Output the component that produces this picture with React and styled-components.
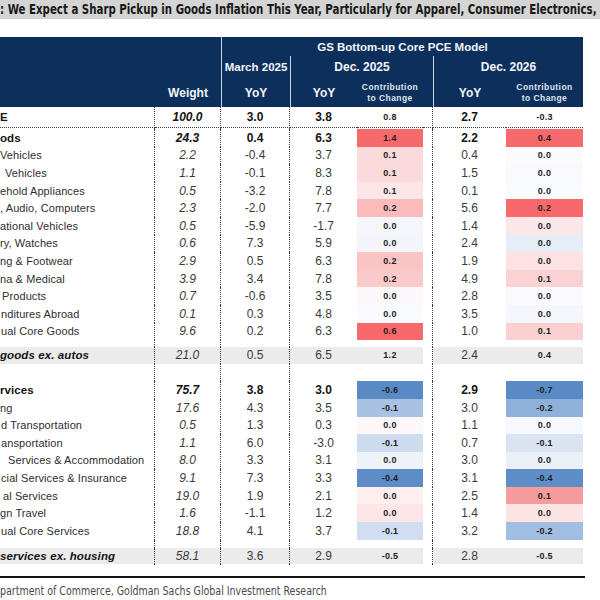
import React from 'react';
import styled, { createGlobalStyle } from 'styled-components';

const GRID = '155px 66px 69px 67px 66px 10px 73px 77px';
const DOT = '1px dotted #3a3a3a';
const NAVY = '#0d2f5c';
const GRAY = '#ebebeb';
const CONDENSED = '"Liberation Sans Narrow", "DejaVu Sans Condensed", sans-serif';

const GlobalStyle = createGlobalStyle`
  html, body { margin: 0; padding: 0; background: #fff; }
  body { font-family: "Liberation Sans", Arial, sans-serif; overflow: hidden; }
  * { box-sizing: border-box; }
`;

const Page = styled.div`
  width: 600px;
  height: 600px;
  overflow: hidden;
  background: #fff;
`;

const TitleBar = styled.div`
  height: 19px;
  background: #d4d4d4;
  color: #181818;
  font-family: ${CONDENSED};
  font-weight: 700;
  font-size: 14px;
  line-height: 19px;
  white-space: nowrap;
  overflow: hidden;
`;

const Squeeze = styled.span`
  display: inline-block;
  transform: scaleX(${p => p.$x});
  transform-origin: left center;
`;

const Table = styled.div`
  margin-top: 18px;
  width: 583px;
`;

const Header = styled.div`
  display: grid;
  grid-template-columns: ${GRID};
  grid-template-rows: 19px 22px 29px;
  background: ${NAVY};
  color: #f2f4f8;
`;

const HeadCell = styled.div`
  grid-column: ${p => p.$col};
  grid-row: ${p => p.$row};
  border-left: ${p => (p.$line ? '1px solid #c8d2df' : 'none')};
  display: flex;
  align-items: center;
  justify-content: center;
  font-weight: 700;
  font-size: ${p => p.$size || 11.5}px;
  white-space: nowrap;
`;

const SubHead = styled.div`
  font-size: 8.5px;
  font-weight: 700;
  line-height: 11px;
  letter-spacing: 0.45px;
  text-align: center;
  color: #dfe6ef;
`;

const Row = styled.div`
  display: grid;
  grid-template-columns: ${GRID};
  height: ${p => p.$h}px;
`;

const Cell = styled.div`
  display: flex;
  align-items: center;
  justify-content: center;
  white-space: nowrap;
  overflow: hidden;
  border-right: ${p => (p.$line ? DOT : 'none')};
  border-bottom: ${p => (p.$under ? DOT : 'none')};
  background: ${p => p.$bg || 'transparent'};
`;

const LabelCell = styled(Cell)`
  justify-content: flex-start;
  padding-left: ${p => p.$indent || 0}px;
  font-size: ${p => (p.$bold ? 11.5 : 11)}px;
  letter-spacing: 0.1px;
  font-weight: ${p => (p.$bold ? 700 : 400)};
  font-style: ${p => (p.$italic ? 'italic' : 'normal')};
  color: ${p => (p.$bold ? '#141414' : '#2e2e2e')};
`;

const NumCell = styled(Cell)`
  font-size: 12px;
  font-weight: ${p => (p.$bold ? 700 : 400)};
  font-style: ${p => (p.$italic ? 'italic' : 'normal')};
  color: ${p => (p.$bold ? '#141414' : '#3a3a3a')};
`;

const ContribCell = styled(Cell)`
  font-size: 9px;
  font-weight: 700;
  letter-spacing: 0.3px;
  color: #1e1e1e;
`;

const RuleLine = styled.div`
  margin-top: 11px;
  width: 585px;
  height: 2px;
  background: #111;
`;

const Source = styled.div`
  font-family: ${CONDENSED};
  font-size: 13px;
  color: #4a4a4a;
  line-height: 26px;
  white-space: nowrap;
  overflow: hidden;
`;

const goods = [
  ['Vehicles', 0, '2.2', '-0.4', '3.7', '0.1', '#fbdadb', '0.4', '0.0', '#fbfbfe'],
  ['Vehicles', 5, '1.1', '-0.1', '8.3', '0.1', '#fbdadb', '1.5', '0.0', '#f9fafd'],
  ['ehold Appliances', 0, '0.5', '-3.2', '7.8', '0.1', '#fce6e7', '0.1', '0.0', '#fafbfe'],
  [', Audio, Computers', 0, '2.3', '-2.0', '7.7', '0.2', '#fabbbd', '5.6', '0.2', '#f8696b'],
  ['ational Vehicles', 0, '0.5', '-5.9', '-1.7', '0.0', '#f5f6fc', '1.4', '0.0', '#fbe7e8'],
  ['ry, Watches', 0, '0.6', '7.3', '5.9', '0.0', '#f3f5fb', '2.4', '0.0', '#e6edf7'],
  ['ng & Footwear', 0, '2.9', '0.5', '6.3', '0.2', '#fac4c5', '1.9', '0.0', '#fce2e3'],
  ['na & Medical', 0, '3.9', '3.4', '7.8', '0.2', '#fac9ca', '4.9', '0.1', '#fbd2d3'],
  ['Products', 2, '0.7', '-0.6', '3.5', '0.0', '#fbf7fa', '2.8', '0.0', '#fafafe'],
  ['nditures Abroad', 1, '0.1', '0.3', '4.8', '0.0', '#fafbfe', '3.5', '0.0', '#f4f6fc'],
  ['ual Core Goods', 1, '9.6', '0.2', '6.3', '0.6', '#f8696b', '1.0', '0.1', '#fbd0d1'],
];

const services = [
  ['ng', 0, '17.6', '4.3', '3.5', '-0.1', '#a9c2e4', '3.0', '-0.2', '#8fb0da'],
  ['d Transportation', 1, '0.5', '1.3', '0.3', '0.0', '#fdf7f9', '1.1', '0.0', '#f7f8fd'],
  ['ansportation', 1, '1.1', '6.0', '-3.0', '-0.1', '#cddbee', '0.7', '-0.1', '#d9e3f2'],
  ['Services & Accommodation', 8, '8.0', '3.3', '3.1', '0.0', '#eef2f9', '3.0', '0.0', '#ebf0f8'],
  ['cial Services & Insurance', 1, '9.1', '7.3', '3.3', '-0.4', '#5d8cc7', '3.1', '-0.4', '#5e8dc7'],
  ['al Services', 3, '19.0', '1.9', '2.1', '0.0', '#fdeeef', '2.5', '0.1', '#f79c9d'],
  ['gn Travel', 0, '1.6', '-1.1', '1.2', '0.0', '#fce6e7', '1.4', '0.0', '#fce3e4'],
  ['ual Core Services', 1, '18.8', '4.1', '3.7', '-0.1', '#d1ddf0', '3.2', '-0.2', '#a2bde2'],
];

function DataRow({ d, kind = 'sub', h = 17.6, under = false }) {
  const [label, indent, w, m, y25, c25, b25, y26, c26, b26] = d;
  const bold = kind === 'top' || kind === 'gray';
  const numBold = kind === 'top';
  const italicLabel = kind === 'gray';
  const g = kind === 'gray' ? GRAY : undefined;
  return (
    <Row $h={h}>
      <LabelCell $line $under={under} $bg={g} $indent={indent} $bold={bold} $italic={italicLabel}>
        {label}
      </LabelCell>
      <NumCell $line $under={under} $bg={g} $italic $bold={numBold}>{w}</NumCell>
      <NumCell $line $under={under} $bg={g} $bold={numBold}>{m}</NumCell>
      <NumCell $under={under} $bg={g} $bold={numBold}>{y25}</NumCell>
      <ContribCell $under={under} $bg={g || b25}>{c25}</ContribCell>
      <Cell $line $under={under} />
      <NumCell $under={under} $bg={g} $bold={numBold}>{y26}</NumCell>
      <ContribCell $under={under} $bg={g || b26}>{c26}</ContribCell>
    </Row>
  );
}

function Gap({ h }) {
  return (
    <Row $h={h}>
      <Cell $line />
      <Cell $line />
      <Cell $line />
      <Cell />
      <Cell />
      <Cell $line />
      <Cell />
      <Cell />
    </Row>
  );
}

export default function App() {
  return (
    <Page>
      <GlobalStyle />
      <TitleBar>
        <Squeeze $x={0.812}>
          : We Expect a Sharp Pickup in Goods Inflation This Year, Particularly for Apparel, Consumer Electronics,
        </Squeeze>
      </TitleBar>
      <Table>
        <Header>
          <HeadCell $col="3 / 9" $row="1" $line>GS Bottom-up Core PCE Model</HeadCell>
          <HeadCell $col="3" $row="2" $line>March 2025</HeadCell>
          <HeadCell $col="4 / 7" $row="2" $line $size={12}>Dec. 2025</HeadCell>
          <HeadCell $col="7 / 9" $row="2" $line $size={12}>Dec. 2026</HeadCell>
          <HeadCell $col="2" $row="3" $size={12}>Weight</HeadCell>
          <HeadCell $col="3" $row="3" $line $size={12}>YoY</HeadCell>
          <HeadCell $col="4" $row="3" $line $size={12}>YoY</HeadCell>
          <HeadCell $col="5" $row="3">
            <SubHead>Contribution<br />to Change</SubHead>
          </HeadCell>
          <HeadCell $col="7" $row="3" $line $size={12}>YoY</HeadCell>
          <HeadCell $col="8" $row="3">
            <SubHead>Contribution<br />to Change</SubHead>
          </HeadCell>
        </Header>

        <DataRow kind="top" h={21} under d={['E', 0, '100.0', '3.0', '3.8', '0.8', '#fff', '2.7', '-0.3', '#fff']} />
        <Gap h={1} />
        <DataRow kind="top" d={['ods', 0, '24.3', '0.4', '6.3', '1.4', '#f8696b', '2.2', '0.4', '#f8696b']} />
        {goods.map((d, i) => (
          <DataRow key={'g' + i} d={d} />
        ))}
        <Gap h={6.8} />
        <DataRow kind="gray" h={17} d={['goods ex. autos', 0, '21.0', '0.5', '6.5', '1.2', null, '2.4', '0.4', null]} />
        <Gap h={17.4} />
        <DataRow kind="top" d={['rvices', 0, '75.7', '3.8', '3.0', '-0.6', '#5a8ac6', '2.9', '-0.7', '#5a8ac6']} />
        {services.map((d, i) => (
          <DataRow key={'s' + i} d={d} />
        ))}
        <Gap h={8} />
        <DataRow kind="gray" h={16} d={['services ex. housing', 0, '58.1', '3.6', '2.9', '-0.5', null, '2.8', '-0.5', null]} />
        <Gap h={1.5} />
      </Table>
      <RuleLine />
      <Source>
        <Squeeze $x={0.81}>partment of Commerce, Goldman Sachs Global Investment Research</Squeeze>
      </Source>
    </Page>
  );
}
